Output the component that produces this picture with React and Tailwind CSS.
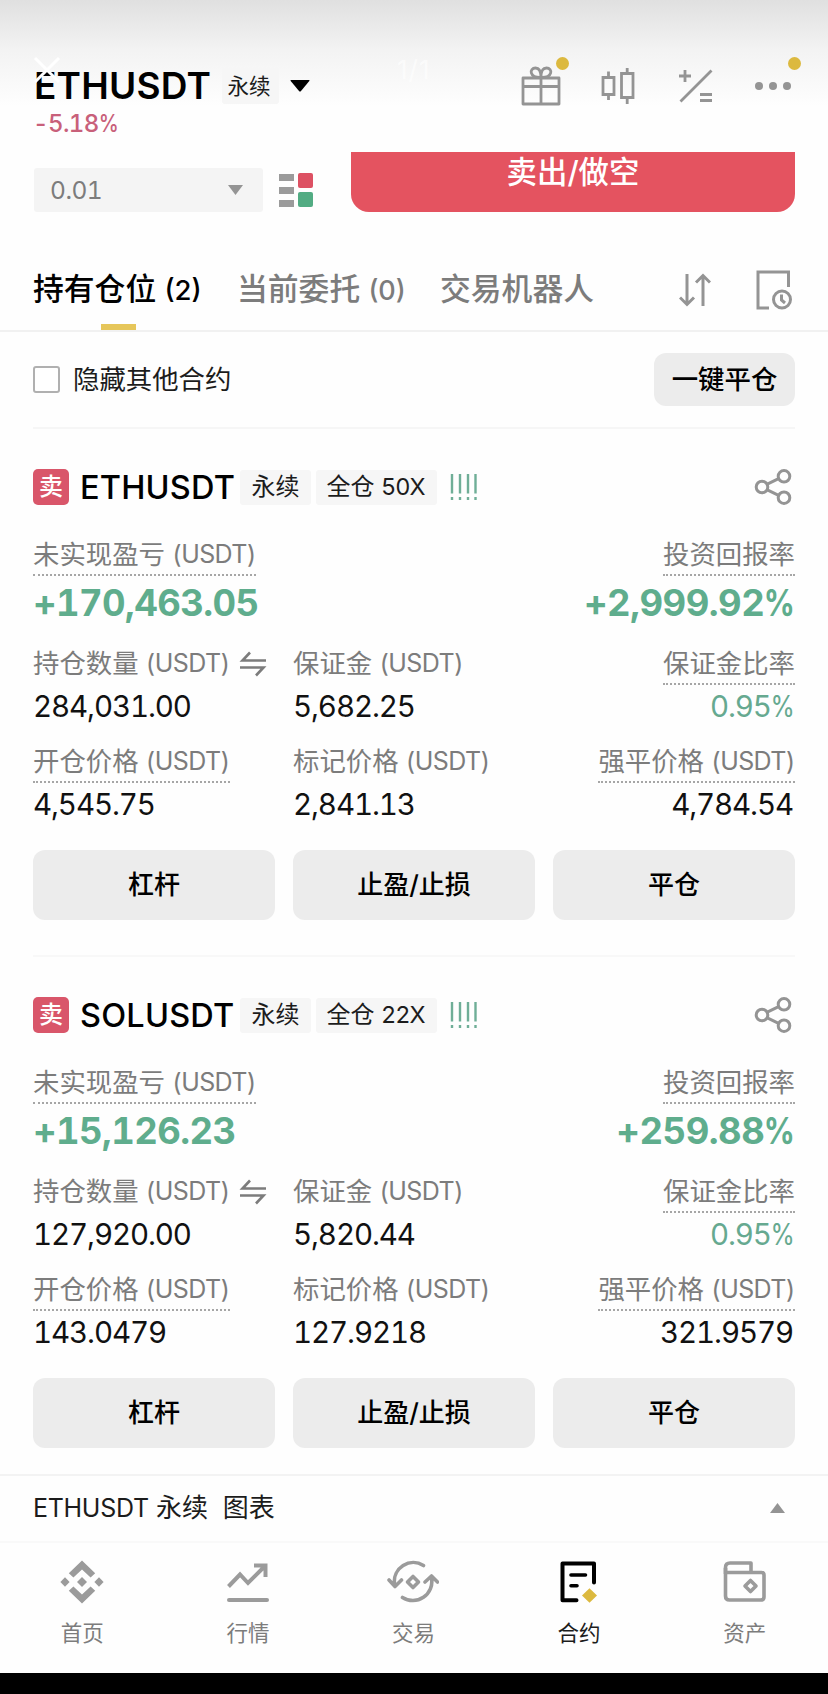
import React from 'react'

const positions = [
  {
    symbol: 'ETHUSDT',
    leverage: '50X',
    pnl: '+170,463.05',
    roi: '+2,999.92',
    size: '284,031.00',
    margin: '5,682.25',
    ratio: '0.95',
    entry: '4,545.75',
    mark: '2,841.13',
    liq: '4,784.54',
  },
  {
    symbol: 'SOLUSDT',
    leverage: '22X',
    pnl: '+15,126.23',
    roi: '+259.88',
    size: '127,920.00',
    margin: '5,820.44',
    ratio: '0.95',
    entry: '143.0479',
    mark: '127.9218',
    liq: '321.9579',
  },
]

const navItems = [
  { key: 'home', label: '首页' },
  { key: 'market', label: '行情' },
  { key: 'trade', label: '交易' },
  { key: 'futures', label: '合约', active: true },
  { key: 'wallet', label: '资产' },
]

function NavIcon({ name }) {
  switch (name) {
    case 'home':
      return (
        <svg className="w-11 h-11 text-[#9b9b9b]" viewBox="0 0 44 44" fill="currentColor">
          <path d="M22 0.5L35.2 13.2L30.6 17.6L22 9.4L13.4 17.6L8.8 13.2Z" />
          <path d="M22 43.5L35.2 30.8L30.6 26.4L22 34.6L13.4 26.4L8.8 30.8Z" />
          <path d="M22 17L27 22L22 27L17 22Z" />
          <path d="M5 17.2L9.6 22L5 26.8L0.4 22Z" />
          <path d="M39 17.2L43.6 22L39 26.8L34.4 22Z" />
        </svg>
      )
    case 'market':
      return (
        <svg className="w-11 h-11 text-[#9b9b9b]" viewBox="0 0 44 44" fill="none" stroke="currentColor" strokeWidth="4">
          <path d="M2.5 26.5L14 14.5L22 23L38.5 6.5M28 5.5H39.5V17" />
          <path strokeLinecap="round" d="M3 40H41" />
        </svg>
      )
    case 'trade':
      return (
        <svg className="w-13 h-11 text-[#9b9b9b]" viewBox="0 0 52 44" fill="none" stroke="currentColor" strokeWidth="3.6" strokeLinecap="round" strokeLinejoin="round">
          <path d="M36.5 5.5A19 19 0 0 0 7.5 24M2 20L8 26.5L14.5 20" />
          <path d="M15.5 37.5A19 19 0 0 0 44.5 18M38 22L44.5 16L50.5 22" />
          <path d="M26 16.5L31.5 22L26 27.5L20.5 22Z" />
        </svg>
      )
    case 'futures':
      return (
        <svg className="w-11 h-11" viewBox="0 0 44 44" fill="none">
          <path stroke="#000" strokeWidth="4" strokeLinecap="round" strokeLinejoin="round" d="M19.5 40.3H5.5V3.5H37V22.5" />
          <path stroke="#000" strokeWidth="3.6" strokeLinecap="round" d="M14 15H28.5M14 25.7H20" />
          <path fill="#dcb93f" d="M32.5 28.3L40 35.5L32.5 42.7L25 35.5Z" />
        </svg>
      )
    case 'wallet':
      return (
        <svg className="w-11 h-11 text-[#9b9b9b]" viewBox="0 0 44 44" fill="none" stroke="currentColor" strokeWidth="3.6" strokeLinejoin="round">
          <path d="M2.5 14V7.5Q2.5 3 7 3H28V12" />
          <path d="M2.5 8V36Q2.5 40 6.5 40H37.5Q41 40 41 37V15Q41 12.5 38.5 12.5H2.5" />
          <path d="M27.5 20.5L33 26L27.5 31.5L22 26Z" />
        </svg>
      )
    default:
      return null
  }
}

function Tag({ children, className = 'text-[24px]' }) {
  return (
    <span className={`flex items-center justify-center rounded-[3px] bg-[#f6f6f6] whitespace-pre text-[#1c1c1c] ${className}`}>
      {children}
    </span>
  )
}

function Percent() {
  return <span className="-ml-[0.16em] inline-block origin-right scale-x-[0.84]">%</span>
}

function Label({ text, unit, dotted, right, icon }) {
  return (
    <div className={`flex items-start tracking-normal ${right ? 'justify-end' : ''}`}>
      <span className={`flex h-[41px] text-[26.4px] leading-[38px] whitespace-nowrap text-[#7c7c7c] ${dotted ? 'border-b-2 border-dotted border-[#a6a6a6]' : ''}`}>
        {text}
        {unit && <span className="ml-[7px] text-[25px] tracking-[-0.6px]">({unit})</span>}
      </span>
      {icon}
    </div>
  )
}

function SwapIcon() {
  return (
    <svg className="ml-[9px] mt-[7px] h-[26px] w-[28px] shrink-0" viewBox="0 0 28 26" fill="none" stroke="#7c7c7c" strokeWidth="2.6">
      <path d="M27 9.5H3.5L11 1.5" />
      <path d="M1 16.5H24.5L17 24.5" />
    </svg>
  )
}

function PositionCard({ item }) {
  return (
    <section className="tabular-nums">
      <div className="flex h-9 items-center">
        <span className="flex h-9 w-9 items-center justify-center rounded-[5px] bg-[#d9566a] text-[24px] font-medium text-white">卖</span>
        <h3 className="ml-[11px] w-[155px] pt-[2px] text-[32.5px] font-medium tracking-[0.2px] whitespace-nowrap text-black">{item.symbol}</h3>
        <Tag className="ml-[5px] h-[35px] w-[71px] text-[24px]">永续</Tag>
        <Tag className="ml-[5px] h-[35px] w-[121px] pr-[2px] text-[24px]">
          全仓 <span className="text-[23.5px] tracking-[-1px]">{item.leverage}</span>
        </Tag>
        <svg className="ml-[12px] h-7 w-7" viewBox="0 0 28 28" fill="none" stroke="#6fae97" strokeWidth="2.4">
          <path d="M3 1V20.5M11 1V20.5M19 1V20.5M26.5 1V20.5" />
          <path d="M3 24V27M11 24V27M19 24V27M26.5 24V27" />
        </svg>
        <svg className="ml-auto mr-[3px] h-9 w-[38px]" viewBox="0 0 38 36" fill="none" stroke="#949494" strokeWidth="3">
          <circle cx="8" cy="18" r="5.8" />
          <circle cx="30" cy="7.3" r="5.8" />
          <circle cx="30" cy="28.7" r="5.8" />
          <path d="M13.3 15.2L24.6 9.7M13.3 20.8L24.6 26.3" />
        </svg>
      </div>

      <div className="mt-[30px] flex justify-between">
        <div>
          <Label text="未实现盈亏" unit="USDT" dotted />
          <div className="mt-1 h-[46px] text-[36.5px] leading-[46px] font-bold tracking-[-0.6px] text-[#5fad8d]">{item.pnl}</div>
        </div>
        <div className="text-right">
          <Label text="投资回报率" dotted right />
          <div className="mt-1 h-[46px] text-[36.5px] leading-[46px] font-bold tracking-[-0.5px] text-[#5fad8d]">
            {item.roi}<Percent />
          </div>
        </div>
      </div>

      <div className="mt-[18px] grid grid-cols-3 gap-x-[18px] text-[29.5px] leading-[34px] tracking-[-1.1px] text-[#111]">
        <div>
          <Label text="持仓数量" unit="USDT" icon={<SwapIcon />} />
          <div className="mt-1">{item.size}</div>
        </div>
        <div>
          <Label text="保证金" unit="USDT" />
          <div className="mt-1">{item.margin}</div>
        </div>
        <div className="text-right">
          <Label text="保证金比率" dotted right />
          <div className="mt-1 pr-px text-[#66a990]">
            {item.ratio}<Percent />
          </div>
        </div>
      </div>

      <div className="mt-[19px] grid grid-cols-3 gap-x-[18px] text-[29.5px] leading-[34px] tracking-[-1.1px] text-[#111]">
        <div>
          <Label text="开仓价格" unit="USDT" dotted />
          <div className="mt-1">{item.entry}</div>
        </div>
        <div>
          <Label text="标记价格" unit="USDT" />
          <div className="mt-1">{item.mark}</div>
        </div>
        <div className="text-right">
          <Label text="强平价格" unit="USDT" dotted right />
          <div className="mt-1 pr-[2px]">{item.liq}</div>
        </div>
      </div>

      <div className="mt-[29px] grid grid-cols-3 gap-[18px]">
        {['杠杆', '止盈/止损', '平仓'].map((text) => (
          <button key={text} className="h-[70px] rounded-xl bg-[#ececec] pb-[2px] text-[26px] font-medium text-black">
            {text}
          </button>
        ))}
      </div>
    </section>
  )
}

function Header() {
  return (
    <header className="relative h-[152px] bg-linear-to-b from-[#e0e0e0] via-[#f3f3f3] via-33% to-[#fefefe] to-70% pl-[34px] pr-[33px]">
      <div className="flex items-center pt-[66px]">
        <h1 className="h-[38px] w-[176px] text-[37px] leading-[38px] font-semibold tracking-[0.2px] text-black">ETHUSDT</h1>
        <Tag className="ml-3 h-9 w-[57px] pr-[3px] text-[21.5px]">永续</Tag>
        <svg className="ml-[11px] h-3 w-5" viewBox="0 0 20 12">
          <path d="M1 0H19Q20 0 19.3 1L11 11Q10 12 9 11L0.7 1Q0 0 1 0Z" />
        </svg>

        <div className="ml-auto flex items-center text-[#949494]">
          <span className="relative">
            <svg className="h-10 w-10" viewBox="0 0 40 40" fill="none" stroke="currentColor" strokeWidth="2.8" strokeLinejoin="round">
              <path d="M2 12H38V38H2ZM2 20.5H38M20 12V38" />
              <path d="M20 11.5C8 12 8 2 14.5 2C18.5 2 20 5 20 11.5C20 5 21.5 2 25.5 2C32 2 32 12 20 11.5Z" />
            </svg>
            <i className="absolute -top-[9px] left-[35px] h-[13px] w-[13px] rounded-full bg-[#dcb93f]" />
          </span>
          <svg className="ml-10 h-9 w-[34px]" viewBox="0 0 34 36" fill="none" stroke="currentColor" strokeWidth="2.8">
            <path d="M2 9.5H13V26.5H2ZM7.5 3.5V9.5M7.5 26.5V32M20.5 5.5H32V29.5H20.5ZM26.2 0V5.5M26.2 29.5V36" />
          </svg>
          <svg className="ml-11 h-[34px] w-[34px]" viewBox="0 0 34 34" fill="none" stroke="currentColor" strokeWidth="2.8">
            <path d="M1.5 32.5L32.5 1.5M0 7H12M6 1V13M21 25.5H33M21 31.5H33" />
          </svg>
          <span className="relative ml-[42px] mr-1 flex gap-[6px]">
            <i className="h-2 w-2 rounded-full bg-[#949494]" />
            <i className="h-2 w-2 rounded-full bg-[#949494]" />
            <i className="h-2 w-2 rounded-full bg-[#949494]" />
            <i className="absolute -top-[25px] left-[33px] h-[13px] w-[13px] rounded-full bg-[#dcb93f]" />
          </span>
        </div>
      </div>
      <p className="-ml-px mt-1 text-[24px] leading-[28px] font-medium tracking-[-0.6px] tabular-nums text-[#c8607a]">
        -5.18<Percent />
      </p>

      {/* viewer controls laid over the page */}
      <svg className="absolute left-[33px] top-[56px] h-7 w-7" viewBox="0 0 28 28" stroke="#fff" strokeWidth="3">
        <path d="M2 2L26 26M26 2L2 26" />
      </svg>
      <span className="absolute left-[397px] top-[55px] text-[26px] leading-[30px] tracking-[1px] text-white/60">1/1</span>
    </header>
  )
}

export default function App() {
  return (
    <div className="h-[1694px] w-[828px] overflow-hidden bg-[#fefefe] font-['Inter','Noto_Sans_CJK_SC',sans-serif]">
      <Header />

      <div className="flex h-15 items-end pl-[34px]">
        <div className="flex h-11 w-[229px] items-center justify-between rounded-[3px] bg-[#f4f4f4] pl-4 pr-5 text-[24.5px] tracking-[-0.5px] tabular-nums text-[#7c7c7c]">
          0.01
          <svg className="h-[10px] w-[15px]" viewBox="0 0 15 10" fill="#949494">
            <path d="M0 0H15L7.5 10Z" />
          </svg>
        </div>
        <svg className="mb-[5px] ml-4 h-[34px] w-[34px]" viewBox="0 0 34 34">
          <path fill="#9b9b9b" d="M0 1H15V8H0ZM0 14H15V21H0ZM0 27H15V34H0Z" />
          <rect x="19" y="0" width="15" height="15" rx="2" fill="#dd5163" />
          <rect x="19" y="19" width="15" height="15" rx="2" fill="#52ac83" />
        </svg>
        <button className="ml-[38px] h-15 w-[444px] rounded-b-[18px] bg-[#e45360] pb-[20px] text-[30.4px] leading-[40px] font-medium text-white">
          卖出/做空
        </button>
      </div>

      <nav className="flex h-[120px] items-end border-b-2 border-[#f1f1f1] pl-[33px] text-[30.8px] leading-[44px] font-medium text-[#7c7c7c]">
        <div className="flex w-[170px] flex-col items-center text-black">
          <span className="h-[57px] self-start whitespace-nowrap">
            持有仓位 <span className="text-[27.5px]">(2)</span>
          </span>
          <i className="h-[6px] w-[35px] bg-[#e6c65a]" />
        </div>
        <span className="ml-[34px] h-[63px] w-[168px] whitespace-nowrap">
          当前委托 <span className="text-[27px]">(0)</span>
        </span>
        <span className="ml-[35px] h-[63px] whitespace-nowrap">交易机器人</span>
        <svg className="mb-[23px] ml-auto h-[34px] w-8" viewBox="0 0 32 34" fill="none" stroke="#949494" strokeWidth="3">
          <path d="M8 1V32M1 24.5L8 31.5L15 24.5" />
          <path d="M24 33V2M17 9.5L24 2.5L31 9.5" />
        </svg>
        <svg className="mb-5 ml-[45px] mr-9 h-10 w-9" viewBox="0 0 36 40" fill="none" stroke="#949494" strokeWidth="3">
          <path d="M13 38H2V2H32.5V17" />
          <circle cx="26" cy="29.5" r="8.5" />
          <path d="M25.5 24.5V30L29 33" />
        </svg>
      </nav>

      <main className="px-[33px]">
        <div className="flex h-[97px] items-center border-b-2 border-[#f6f6f6]">
          <span className="h-[27px] w-[27px] rounded-[3px] border-2 border-[#b0b0b0] bg-white" />
          <span className="ml-[13px] text-[26.4px] text-[#1c1c1c]">隐藏其他合约</span>
          <button className="ml-auto h-[53px] w-[141px] rounded-xl bg-[#ececec] text-[26.4px] font-medium text-black">
            一键平仓
          </button>
        </div>

        <div className="flex h-[528px] flex-col border-b-2 border-[#f8f8f8] pt-[40px]">
          <PositionCard item={positions[0]} />
        </div>
        <div className="h-[517px] pt-[40px]">
          <PositionCard item={positions[1]} />
        </div>
      </main>

      <div className="flex h-[67px] items-center justify-between border-t-2 border-[#f3f3f3] pb-[2px] pl-[33px] pr-[43px]">
        <p className="whitespace-pre text-[26px] text-[#1c1c1c]">
          <span className="text-[25px] tracking-[-0.3px]">ETHUSDT</span> 永续  图表
        </p>
        <svg className="h-[10px] w-[15px]" viewBox="0 0 15 10" fill="#949494">
          <path d="M0 10H15L7.5 0Z" />
        </svg>
      </div>

      <footer className="grid h-[132px] grid-cols-5 border-t-2 border-[#f9f9f9]">
        {navItems.map((item) => (
          <div key={item.key} className="flex flex-col items-center pt-[17px] pr-[1px]">
            <NavIcon name={item.key} />
            <span className={`mt-[13px] text-[21.5px] leading-[32px] ${item.active ? 'text-[#1c1c1c]' : 'text-[#7c7c7c]'}`}>
              {item.label}
            </span>
          </div>
        ))}
      </footer>
      <div className="h-[22px] bg-black" />
    </div>
  )
}
